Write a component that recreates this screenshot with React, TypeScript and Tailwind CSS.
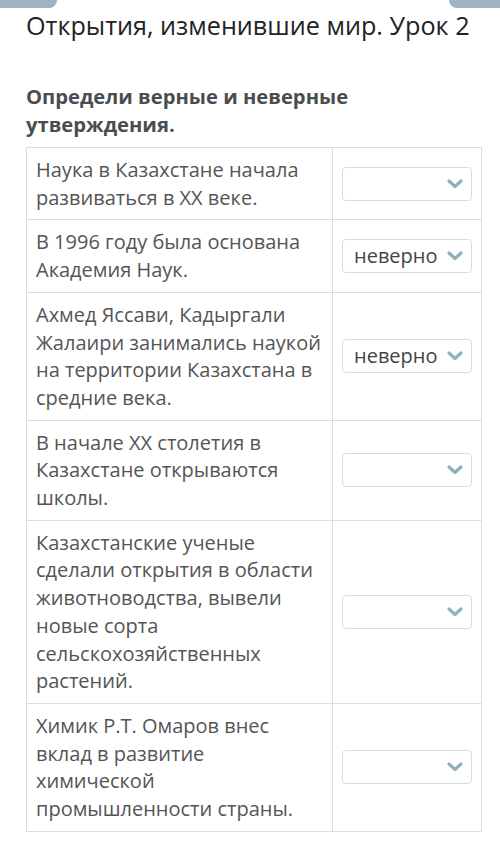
const ROWS: { text: string; value: string }[] = [
  { text: "Наука в Казахстане начала развиваться в XX веке.", value: "" },
  { text: "В 1996 году была основана Академия Наук.", value: "неверно" },
  {
    text: "Ахмед Яссави, Кадыргали Жалаири занимались наукой на территории Казахстана в средние века.",
    value: "неверно",
  },
  { text: "В начале XX столетия в Казахстане открываются школы.", value: "" },
  {
    text: "Казахстанские ученые сделали открытия в области животноводства, вывели новые сорта сельскохозяйственных растений.",
    value: "",
  },
  {
    text: "Химик Р.Т. Омаров внес вклад в развитие химической промышленности страны.",
    value: "",
  },
];

function Chevron() {
  return (
    <svg width="18" height="12" viewBox="0 0 18 12" className="shrink-0">
      <path d="M3 3 L9 8.5 L15 3" fill="none" stroke="#8fb1b9" strokeWidth="3.2" strokeLinecap="round" strokeLinejoin="round" />
    </svg>
  );
}

function Dropdown({ value }: { value: string }) {
  return (
    <div className="flex h-[34px] w-[130px] items-center justify-between rounded-[4px] border border-[#d6dde0] bg-white pl-[11px] pr-[7px]">
      <span className="text-[20px] leading-none text-[#444]">{value}</span>
      <Chevron />
    </div>
  );
}

export default function App() {
  return (
    <div className="relative min-h-[856px] w-[500px] bg-white font-['Open_Sans',sans-serif]">
      {/* header tabs peeking from the top */}
      <div className="flex justify-between">
        <div className="h-[8px] w-[57px] rounded-br-[8px] bg-[#9fb3c0]" />
        <div className="h-[8px] w-[51px] rounded-bl-[8px] bg-[#9fb3c0]" />
      </div>

      <h1 className="ml-[26px] mt-[2px] text-[25.2px] leading-[30px] text-[#222]">
        Открытия, изменившие мир. Урок 2
      </h1>

      <p className="ml-[26px] mt-[42px] w-[380px] text-[20.2px] font-bold leading-[28px] text-[#4a4d50]">
        Определи верные и неверные утверждения.
      </p>

      <div className="ml-[26px] mt-[9px] w-[456px] border border-[#dcdcdc]">
        {ROWS.map((r, i) => (
          <div key={i} className={`grid grid-cols-[306px_1fr] ${i > 0 ? "border-t border-[#dcdcdc]" : ""}`}>
            <div className="border-r border-[#dcdcdc] py-[8px] pl-[9px] pr-[8px] text-[20px] leading-[27.7px] text-[#555]">
              {r.text}
            </div>
            <div className="flex items-center pl-[9px]">
              <Dropdown value={r.value} />
            </div>
          </div>
        ))}
      </div>
    </div>
  );
}
